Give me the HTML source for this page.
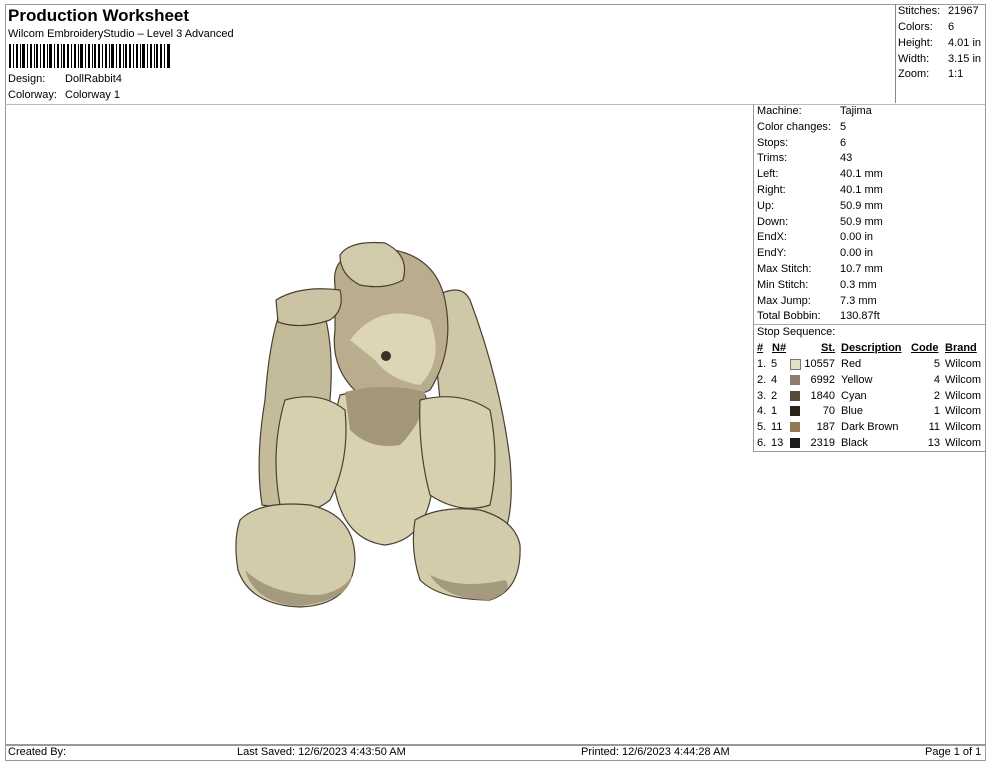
<!DOCTYPE html>
<html><head><meta charset="utf-8"><style>
body{margin:0;width:990px;height:762px;background:#fff;font-family:"Liberation Sans",sans-serif;font-size:11px;color:#000;position:relative;overflow:hidden}
.a{position:absolute}
.t{position:absolute;white-space:nowrap;line-height:15.8px}
</style></head><body>
<div class="a" style="left:5px;top:4px;width:979px;height:99px;border:1px solid #999"></div>
<div class="a" style="left:895px;top:4px;width:1px;height:99px;background:#888"></div>
<div class="a" style="left:5px;top:104px;width:979px;height:640px;border:1px solid #999;border-top:1px solid #bbb"></div>
<div class="a" style="left:753px;top:104px;width:232px;height:347px;border-left:1px solid #999;border-bottom:1px solid #999"></div>
<div class="a" style="left:753px;top:324px;width:232px;height:1px;background:#aaa"></div>
<div class="a" style="left:5px;top:744px;width:979px;height:15px;border:1px solid #999"></div>

<div class="t" style="left:8px;top:6px;font-size:17px;font-weight:bold;line-height:20px">Production Worksheet</div>
<div class="t" style="left:8px;top:27px">Wilcom EmbroideryStudio – Level 3 Advanced</div>
<svg class="a" style="left:9px;top:44px" width="162" height="24">
<g fill="#000">
<rect x="0" y="0" width="2" height="24"/><rect x="4" y="0" width="1" height="24"/><rect x="7" y="0" width="2" height="24"/><rect x="11" y="0" width="1" height="24"/><rect x="13" y="0" width="3" height="24"/><rect x="18" y="0" width="1" height="24"/><rect x="21" y="0" width="2" height="24"/><rect x="25" y="0" width="1" height="24"/><rect x="27" y="0" width="2" height="24"/><rect x="31" y="0" width="1" height="24"/><rect x="34" y="0" width="2" height="24"/><rect x="38" y="0" width="1" height="24"/><rect x="40" y="0" width="3" height="24"/><rect x="45" y="0" width="1" height="24"/><rect x="48" y="0" width="2" height="24"/><rect x="52" y="0" width="1" height="24"/><rect x="54" y="0" width="2" height="24"/><rect x="58" y="0" width="2" height="24"/><rect x="62" y="0" width="1" height="24"/><rect x="65" y="0" width="2" height="24"/><rect x="69" y="0" width="1" height="24"/><rect x="71" y="0" width="3" height="24"/><rect x="76" y="0" width="1" height="24"/><rect x="79" y="0" width="2" height="24"/><rect x="83" y="0" width="1" height="24"/><rect x="85" y="0" width="2" height="24"/><rect x="89" y="0" width="2" height="24"/><rect x="93" y="0" width="1" height="24"/><rect x="96" y="0" width="2" height="24"/><rect x="100" y="0" width="1" height="24"/><rect x="102" y="0" width="3" height="24"/><rect x="107" y="0" width="1" height="24"/><rect x="110" y="0" width="2" height="24"/><rect x="114" y="0" width="1" height="24"/><rect x="116" y="0" width="2" height="24"/><rect x="120" y="0" width="2" height="24"/><rect x="124" y="0" width="1" height="24"/><rect x="127" y="0" width="2" height="24"/><rect x="131" y="0" width="1" height="24"/><rect x="133" y="0" width="3" height="24"/><rect x="138" y="0" width="1" height="24"/><rect x="141" y="0" width="2" height="24"/><rect x="145" y="0" width="1" height="24"/><rect x="147" y="0" width="2" height="24"/><rect x="151" y="0" width="2" height="24"/><rect x="155" y="0" width="1" height="24"/><rect x="158" y="0" width="3" height="24"/>
</g></svg>
<div class="t" style="left:8px;top:72px">Design:</div><div class="t" style="left:65px;top:72px">DollRabbit4</div>
<div class="t" style="left:8px;top:88px">Colorway:</div><div class="t" style="left:65px;top:88px">Colorway 1</div>

<div class="t" style="left:898px;top:4px">Stitches:</div><div class="t" style="left:948px;top:4px">21967</div>
<div class="t" style="left:898px;top:20px">Colors:</div><div class="t" style="left:948px;top:20px">6</div>
<div class="t" style="left:898px;top:36px">Height:</div><div class="t" style="left:948px;top:36px">4.01 in</div>
<div class="t" style="left:898px;top:52px">Width:</div><div class="t" style="left:948px;top:52px">3.15 in</div>
<div class="t" style="left:898px;top:67px">Zoom:</div><div class="t" style="left:948px;top:67px">1:1</div>

<div class="a" style="left:757px;top:104px">
<div class="t" style="top:0">Machine:</div><div class="t" style="left:83px;top:0">Tajima</div>
<div class="t" style="top:15.8px">Color changes:</div><div class="t" style="left:83px;top:15.8px">5</div>
<div class="t" style="top:31.6px">Stops:</div><div class="t" style="left:83px;top:31.6px">6</div>
<div class="t" style="top:47.4px">Trims:</div><div class="t" style="left:83px;top:47.4px">43</div>
<div class="t" style="top:63.2px">Left:</div><div class="t" style="left:83px;top:63.2px">40.1 mm</div>
<div class="t" style="top:79px">Right:</div><div class="t" style="left:83px;top:79px">40.1 mm</div>
<div class="t" style="top:94.8px">Up:</div><div class="t" style="left:83px;top:94.8px">50.9 mm</div>
<div class="t" style="top:110.6px">Down:</div><div class="t" style="left:83px;top:110.6px">50.9 mm</div>
<div class="t" style="top:126.4px">EndX:</div><div class="t" style="left:83px;top:126.4px">0.00 in</div>
<div class="t" style="top:142.2px">EndY:</div><div class="t" style="left:83px;top:142.2px">0.00 in</div>
<div class="t" style="top:158px">Max Stitch:</div><div class="t" style="left:83px;top:158px">10.7 mm</div>
<div class="t" style="top:173.8px">Min Stitch:</div><div class="t" style="left:83px;top:173.8px">0.3 mm</div>
<div class="t" style="top:189.6px">Max Jump:</div><div class="t" style="left:83px;top:189.6px">7.3 mm</div>
<div class="t" style="top:205.4px">Total Bobbin:</div><div class="t" style="left:83px;top:205.4px">130.87ft</div>
<div class="t" style="top:221.2px">Stop Sequence:</div>
<div class="t" style="top:237px;font-weight:bold;text-decoration:underline">#</div>
<div class="t" style="left:15px;top:237px;font-weight:bold;text-decoration:underline">N#</div>
<div class="t" style="left:64px;top:237px;font-weight:bold;text-decoration:underline">St.</div>
<div class="t" style="left:84px;top:237px;font-weight:bold;text-decoration:underline">Description</div>
<div class="t" style="left:154px;top:237px;font-weight:bold;text-decoration:underline">Code</div>
<div class="t" style="left:188px;top:237px;font-weight:bold;text-decoration:underline">Brand</div>
</div>
<div class="a" style="left:757px;top:357px;width:228px">
<div style="position:relative;height:15.8px"><span class="t">1.</span><span class="t" style="left:14px">5</span><span class="a" style="left:33px;top:2px;width:9px;height:9px;background:#e3dfc3;border:1px solid #777"></span><span class="t" style="right:150px">10557</span><span class="t" style="left:84px">Red</span><span class="t" style="right:45px">5</span><span class="t" style="left:188px">Wilcom</span></div>
<div style="position:relative;height:15.8px"><span class="t">2.</span><span class="t" style="left:14px">4</span><span class="a" style="left:33px;top:2px;width:10px;height:10px;background:#8c7e6b"></span><span class="t" style="right:150px">6992</span><span class="t" style="left:84px">Yellow</span><span class="t" style="right:45px">4</span><span class="t" style="left:188px">Wilcom</span></div>
<div style="position:relative;height:15.8px"><span class="t">3.</span><span class="t" style="left:14px">2</span><span class="a" style="left:33px;top:2px;width:10px;height:10px;background:#574a3b"></span><span class="t" style="right:150px">1840</span><span class="t" style="left:84px">Cyan</span><span class="t" style="right:45px">2</span><span class="t" style="left:188px">Wilcom</span></div>
<div style="position:relative;height:15.8px"><span class="t">4.</span><span class="t" style="left:14px">1</span><span class="a" style="left:33px;top:2px;width:10px;height:10px;background:#2a2418"></span><span class="t" style="right:150px">70</span><span class="t" style="left:84px">Blue</span><span class="t" style="right:45px">1</span><span class="t" style="left:188px">Wilcom</span></div>
<div style="position:relative;height:15.8px"><span class="t">5.</span><span class="t" style="left:14px">11</span><span class="a" style="left:33px;top:2px;width:10px;height:10px;background:#8f7a55"></span><span class="t" style="right:150px">187</span><span class="t" style="left:84px">Dark Brown</span><span class="t" style="right:45px">11</span><span class="t" style="left:188px">Wilcom</span></div>
<div style="position:relative;height:15.8px"><span class="t">6.</span><span class="t" style="left:14px">13</span><span class="a" style="left:33px;top:2px;width:10px;height:10px;background:#1c1c1c"></span><span class="t" style="right:150px">2319</span><span class="t" style="left:84px">Black</span><span class="t" style="right:45px">13</span><span class="t" style="left:188px">Wilcom</span></div>
</div>

<svg class="a" style="left:0;top:0" width="750" height="740">
<g stroke="#4a4030" stroke-width="1.2" stroke-linejoin="round">
<path d="M285 300 Q270 330 265 400 Q255 460 262 505 L300 510 Q330 460 330 400 Q335 340 320 300 Z" fill="#c4bb9b"/>
<path d="M430 300 Q460 280 470 300 Q500 380 510 460 Q515 520 500 540 L470 535 Q445 470 440 400 Z" fill="#cec7a8"/>
<path d="M335 285 Q330 250 380 248 Q435 252 445 300 Q455 350 430 390 Q400 405 360 395 Q330 370 335 330 Z" fill="#b9ad8e"/>
<path d="M350 340 Q380 300 430 320 Q445 360 420 385 Q390 380 375 360 Z" fill="#dcd6b5" stroke="none"/>
<path d="M340 255 Q350 240 385 243 Q410 255 403 280 Q385 290 360 285 Q340 275 340 255 Z" fill="#d2cbab"/>
<path d="M276 300 Q300 285 340 290 Q345 310 330 320 Q300 330 278 322 Z" fill="#cbc3a3"/>
<path d="M340 395 Q330 430 335 490 Q345 540 385 545 Q425 540 432 490 Q438 430 425 395 Q385 385 340 395 Z" fill="#d8d2b0"/>
<path d="M345 392 Q385 382 425 392 Q425 420 400 445 Q370 450 350 430 Z" fill="#a39679" stroke="none"/>
<path d="M285 400 Q320 390 345 410 Q350 460 330 500 Q305 520 280 505 Q270 450 285 400 Z" fill="#d6d0ae"/>
<path d="M420 400 Q460 390 490 410 Q500 460 490 505 Q460 515 430 495 Q418 450 420 400 Z" fill="#d6d0ae"/>
<path d="M240 520 Q260 500 310 505 Q355 515 355 560 Q352 605 300 607 Q250 605 238 570 Q233 540 240 520 Z" fill="#d3ccaa"/>
<path d="M415 520 Q440 505 480 510 Q515 520 520 545 Q522 590 490 600 Q440 600 420 580 Q410 550 415 520 Z" fill="#d3ccaa"/>
<path d="M245 570 Q270 595 320 595 Q345 590 352 575 Q350 600 300 606 Q255 604 245 570 Z" fill="#a69a7e" stroke="none"/>
<path d="M430 575 Q460 590 505 580 Q515 590 490 600 Q445 600 430 575 Z" fill="#a69a7e" stroke="none"/>
</g>
<circle cx="386" cy="356" r="5" fill="#3a3028"/>
</svg>

<div class="t" style="left:8px;top:744px;line-height:16px">Created By:</div>
<div class="t" style="left:237px;top:744px;line-height:16px">Last Saved: 12/6/2023 4:43:50 AM</div>
<div class="t" style="left:581px;top:744px;line-height:16px">Printed: 12/6/2023 4:44:28 AM</div>
<div class="t" style="left:925px;top:744px;line-height:16px">Page 1 of 1</div>
</body></html>
